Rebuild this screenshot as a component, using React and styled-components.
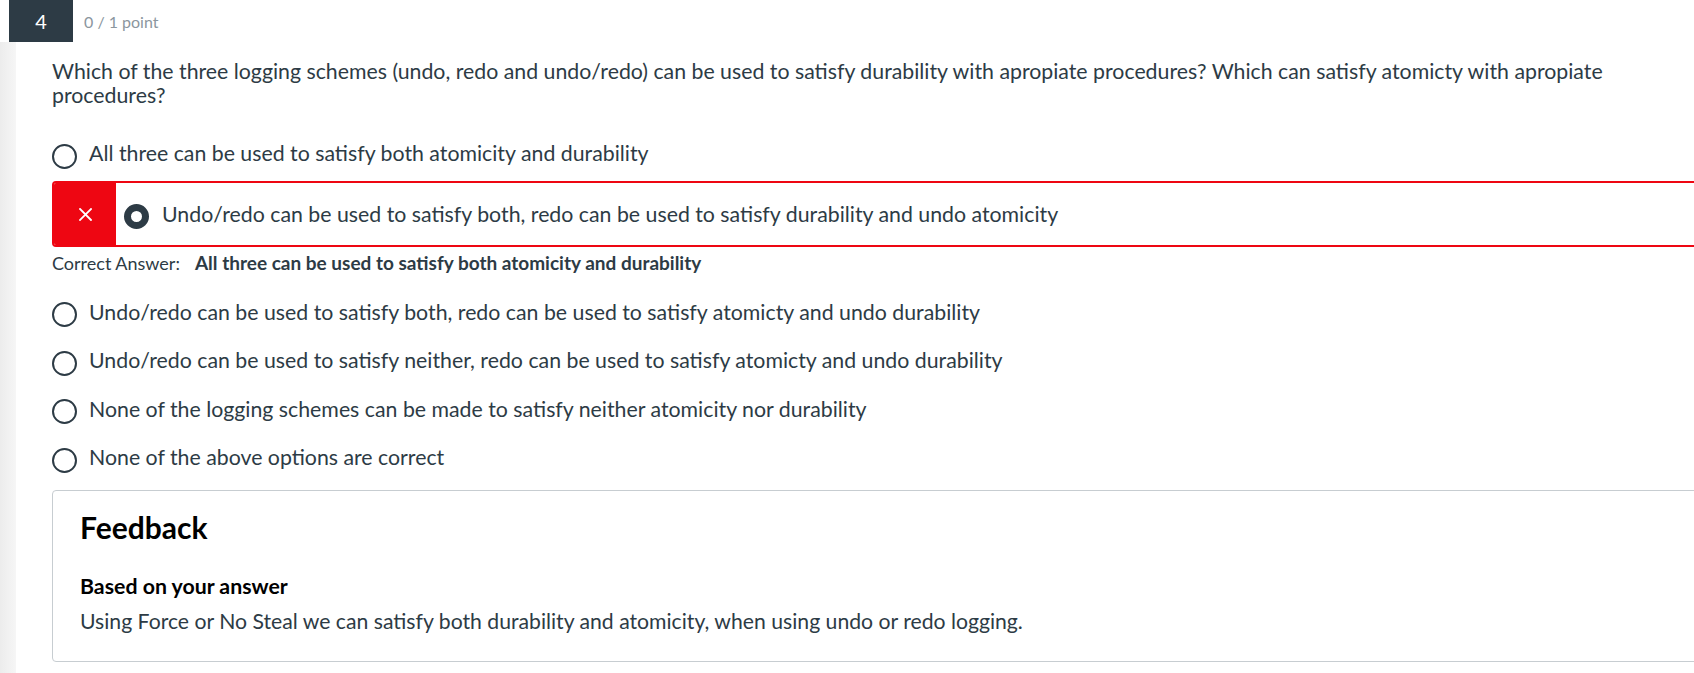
import styled, { createGlobalStyle } from 'styled-components';

const GlobalStyle = createGlobalStyle`
  html, body {
    margin: 0;
    padding: 0;
    background: #fff;
    overflow: hidden;
  }
  body {
    font-family: Lato, "Open Sans", sans-serif;
    color: #2d3b45;
  }
`;

const Page = styled.div`
  display: flex;
  flex-direction: column;
  width: 1694px;
  min-height: 673px;
`;

const Header = styled.header`
  display: flex;
  align-items: center;
  height: 42px;
  padding-left: 9px;
  gap: 11px;
`;

const QuestionNumber = styled.div`
  width: 64px;
  height: 42px;
  background: #2d3b45;
  color: #fff;
  font-size: 20px;
  display: flex;
  align-items: center;
  justify-content: center;
`;

const Points = styled.span`
  font-size: 16px;
  color: #8b969e;
`;

const Body = styled.div`
  display: flex;
  flex: 1;
`;

const Strip = styled.div`
  width: 16px;
  flex-shrink: 0;
  background: linear-gradient(to right, #ececec, #f6f6f6);
`;

const Content = styled.div`
  padding-left: 36px;
  width: 1700px;
  flex-shrink: 0;
`;

const Question = styled.p`
  margin: 18px 0 22px;
  width: 1620px;
  font-size: 21.3px;
  line-height: 23.5px;
`;

const Option = styled.div`
  display: flex;
  align-items: center;
  gap: 12px;
  height: 48.5px;
  font-size: 21.3px;
`;

const Radio = styled.span`
  width: 25px;
  height: 25px;
  margin-top: 6px;
  box-sizing: border-box;
  border-radius: 50%;
  flex-shrink: 0;
  border: ${p => (p.$checked ? '7px' : '2px')} solid #2d3b45;
  background: #fff;
`;

const Chosen = styled.div`
  display: flex;
  align-items: center;
  height: 66px;
  box-sizing: border-box;
  margin-top: 3px;
  border: 2px solid #ee0612;
  border-radius: 4px;
  overflow: hidden;
  font-size: 21.3px;
`;

const WrongMark = styled.div`
  width: 62px;
  align-self: stretch;
  background: #ee0612;
  display: flex;
  align-items: center;
  justify-content: center;
  margin-right: 8px;
  padding-top: 2px;
`;

const ChosenText = styled.span`
  margin-left: 13px;
`;

const CorrectLine = styled.div`
  font-size: 18px;
  line-height: 22px;
  margin: 5px 0 14px;

  & > b {
    font-size: 19px;
    font-weight: 700;
    margin-left: 15px;
  }
`;

const Feedback = styled.section`
  margin-top: 8px;
  border: 1px solid #c7cdd1;
  border-radius: 4px;
  padding: 18px 27px 28px;
`;

const FeedbackTitle = styled.h2`
  margin: 0;
  font-size: 30px;
  line-height: 36px;
  font-weight: 700;
  color: #000;
`;

const FeedbackHead = styled.h3`
  margin: 29px 0 0;
  font-size: 21.3px;
  line-height: 24px;
  font-weight: 700;
  color: #000;
`;

const FeedbackText = styled.p`
  margin: 11px 0 0;
  font-size: 21.2px;
  line-height: 24px;
`;

const options = [
  'Undo/redo can be used to satisfy both, redo can be used to satisfy atomicty and undo durability',
  'Undo/redo can be used to satisfy neither, redo can be used to satisfy atomicty and undo durability',
  'None of the logging schemes can be made to satisfy neither atomicity nor durability',
  'None of the above options are correct',
];

const Cross = () => (
  <svg width="13" height="13" viewBox="0 0 13 13">
    <path d="M1 1 L12 12 M12 1 L1 12" stroke="#fff" strokeWidth="1.8" strokeLinecap="square" />
  </svg>
);

export default function App() {
  return (
    <Page>
      <GlobalStyle />
      <Header>
        <QuestionNumber>4</QuestionNumber>
        <Points>0 / 1 point</Points>
      </Header>
      <Body>
        <Strip />
        <Content>
          <Question>
            Which of the three logging schemes (undo, redo and undo/redo) can be used to satisfy durability with apropiate procedures? Which can satisfy atomicty with apropiate procedures?
          </Question>
          <Option>
            <Radio />
            <span>All three can be used to satisfy both atomicity and durability</span>
          </Option>
          <Chosen>
            <WrongMark><Cross /></WrongMark>
            <Radio $checked />
            <ChosenText>Undo/redo can be used to satisfy both, redo can be used to satisfy durability and undo atomicity</ChosenText>
          </Chosen>
          <CorrectLine>
            Correct Answer:<b>All three can be used to satisfy both atomicity and durability</b>
          </CorrectLine>
          {options.map(text => (
            <Option key={text}>
              <Radio />
              <span>{text}</span>
            </Option>
          ))}
          <Feedback>
            <FeedbackTitle>Feedback</FeedbackTitle>
            <FeedbackHead>Based on your answer</FeedbackHead>
            <FeedbackText>
              Using Force or No Steal we can satisfy both durability and atomicity, when using undo or redo logging.
            </FeedbackText>
          </Feedback>
        </Content>
      </Body>
    </Page>
  );
}
